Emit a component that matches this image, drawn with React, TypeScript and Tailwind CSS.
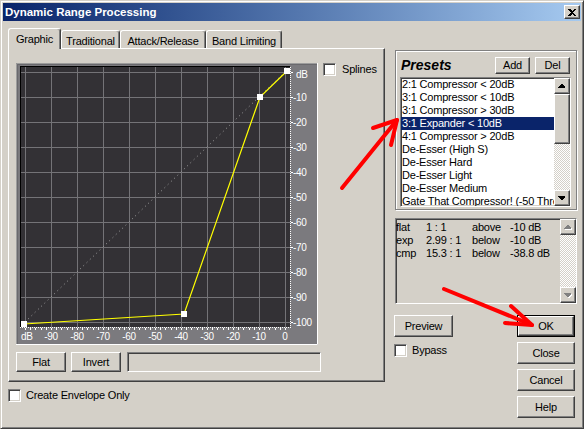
import React from "react";

const raised =
  "border border-t-white border-l-white border-r-[#404040] border-b-[#404040] shadow-[inset_-1px_-1px_#808080]";
const sunken =
  "border border-t-[#808080] border-l-[#808080] border-r-white border-b-white shadow-[inset_1px_1px_#404040,inset_-1px_-1px_#d4d0c8]";
const checker =
  "bg-[image:repeating-conic-gradient(#ffffff_0%_25%,#d4d0c8_0%_50%)] bg-[length:2px_2px]";

function Btn({ label, className }: { label: string; className: string }) {
  return (
    <div className={`${raised} ${className} bg-[#d4d0c8] flex items-center justify-center text-black shrink-0`}>
      {label}
    </div>
  );
}

function Check() {
  return <div className={`${sunken} bg-white w-[13px] h-[13px] shrink-0`} />;
}

function Arrow({ up, disabled }: { up: boolean; disabled?: boolean }) {
  const d = up ? "M3 0 L4 0 L7 3 L7 4 L0 4 L0 3 Z" : "M0 0 L7 0 L7 1 L4 4 L3 4 L0 1 Z";
  return (
    <div className={`${raised} bg-[#d4d0c8] w-[16px] h-[16px] flex items-center justify-center shrink-0`}>
      <svg width="8" height="5" viewBox="0 0 8 5" shapeRendering="crispEdges">
        {disabled && <path d={d} transform="translate(1 1)" fill="#ffffff" />}
        <path d={d} fill={disabled ? "#808080" : "#000000"} />
      </svg>
    </div>
  );
}

function Graph() {
  const vx = Array.from({ length: 11 }, (_, k) => 9 + 26 * k);
  const hy = Array.from({ length: 11 }, (_, k) => 9 + 25 * k);
  const ticks = Array.from({ length: 51 }, (_, j) => 9 + 5.2 * j);
  const right = ["dB", "-10", "-20", "-30", "-40", "-50", "-60", "-70", "-80", "-90", "-100"];
  const bottom = ["dB", "-90", "-80", "-70", "-60", "-50", "-40", "-30", "-20", "-10", "0"];
  const pts: [number, number][] = [
    [8, 261],
    [168, 251],
    [244, 34],
    [271, 8],
  ];
  return (
    <svg width={302} height={282} className="block shrink-0" style={{ fontFamily: '"Liberation Sans", Arial, sans-serif' }}>
      <rect x={0} y={0} width={302} height={282} fill="#7b7a7e" />
      <path d="M0.5 282 V0.5 H302" stroke="#9c9c9c" fill="none" />
      <path d="M1.5 281 V1.5 H301" stroke="#6a696d" fill="none" />
      <path d="M0 281.5 H301.5 V0" stroke="#ffffff" fill="none" />
      <rect x={4} y={3} width={270} height={261} fill="#333135" />
      <line x1={4.5} y1={3} x2={4.5} y2={264} stroke="#000000" />
      <line x1={4} y1={3.5} x2={274} y2={3.5} stroke="#000000" />
      {vx.map((x) => (
        <line key={"v" + x} x1={x + 0.5} y1={4} x2={x + 0.5} y2={264} stroke="#747377" />
      ))}
      {hy.map((y) => (
        <line key={"h" + y} x1={5} y1={y + 0.5} x2={274} y2={y + 0.5} stroke="#747377" />
      ))}
      <line x1={274.5} y1={4} x2={274.5} y2={265} stroke="#ffffff" strokeDasharray="1 1" />
      <line x1={4} y1={264.5} x2={275} y2={264.5} stroke="#ffffff" strokeDasharray="1 1" />
      {ticks.map((x, j) => (
        <line key={"t" + j} x1={Math.round(x) + 0.5} y1={265} x2={Math.round(x) + 0.5} y2={267} stroke="#ffffff" />
      ))}
      {hy.map((y) => (
        <line key={"rt" + y} x1={275} y1={y + 0.5} x2={277} y2={y + 0.5} stroke="#ffffff" />
      ))}
      {right.map((t, k) => (
        <text key={"r" + k} x={k === 0 ? 280 : 277} y={(k === 0 ? 11 : 9 + 25 * k) + 3.6} fontSize={10} letterSpacing={-0.3} fill="#ffffff">
          {t}
        </text>
      ))}
      {bottom.map((t, k) => (
        <text
          key={"b" + k}
          x={k === 0 ? 5 : 9 + 26 * k}
          y={277}
          fontSize={10}
          letterSpacing={-0.3}
          fill="#ffffff"
          textAnchor={k === 0 ? "start" : "middle"}
        >
          {t}
        </text>
      ))}
      <line x1={9} y1={259} x2={269} y2={9} stroke="#a4a4a4" strokeDasharray="1 3.5" />
      <polyline points={pts.map((p) => p.join(",")).join(" ")} fill="none" stroke="#ffff00" strokeWidth={1.2} />
      {pts.map(([x, y], i) => (
        <rect key={"p" + i} x={x - 3} y={y - 3} width={6} height={6} fill="#ffffff" />
      ))}
    </svg>
  );
}

const presets = [
  "2:1 Compressor < 20dB",
  "3:1 Compressor < 10dB",
  "3:1 Compressor > 30dB",
  "3:1 Expander < 10dB",
  "4:1 Compressor > 20dB",
  "De-Esser (High S)",
  "De-Esser Hard",
  "De-Esser Light",
  "De-Esser Medium",
  "Gate That Compressor! (-50 Threshold)",
];

const info = [
  ["flat", "1 : 1", "above", "-10 dB"],
  ["exp", "2.99 : 1", "below", "-10 dB"],
  ["cmp", "15.3 : 1", "below", "-38.8 dB"],
];

export default function App() {
  return (
    <div className="w-[584px] h-[429px] relative overflow-hidden bg-[#d4d0c8] font-['Liberation_Sans',Arial,sans-serif] text-[11px] leading-[13px] tracking-[-0.2px] text-black">
      <div className="w-full h-full flex flex-col border border-t-[#d4d0c8] border-l-[#d4d0c8] border-r-[#404040] border-b-[#404040] shadow-[inset_1px_1px_#ffffff,inset_-1px_-1px_#808080] p-[2px]">
        {/* title bar */}
        <div className="h-[18px] shrink-0 flex items-center justify-between pl-[2px] pr-[1px] bg-linear-to-r from-[#0a246a] to-[#a6caf0]">
          <span className="text-white font-bold text-[11.5px] tracking-normal">Dynamic Range Processing</span>
          <div className={`${raised} bg-[#d4d0c8] w-[16px] h-[14px] flex items-center justify-center`}>
            <svg width="8" height="7" viewBox="0 0 8 7" shapeRendering="crispEdges">
              <path d="M0 0 H2 L4 2 L6 0 H8 L5 3.5 L8 7 H6 L4 5 L2 7 H0 L3 3.5 Z" fill="#000000" />
            </svg>
          </div>
        </div>

        {/* body */}
        <div className="flex pl-[5px] pt-[7px]">
          {/* left column */}
          <div className="w-[377px] flex flex-col shrink-0">
            <div className="h-[21px] flex items-end relative z-10">
              <div className="w-[53px] h-[21px] bg-[#d4d0c8] border-t border-l border-r border-t-white border-l-white border-r-[#404040] shadow-[inset_-1px_0_#808080] rounded-t-[3px] flex justify-center pt-[4px]">
                Graphic
              </div>
              {[
                ["Traditional", "w-[59px]"],
                ["Attack/Release", "w-[86px]"],
                ["Band Limiting", "w-[76px]"],
              ].map(([t, w]) => (
                <div
                  key={t}
                  className={`${w} h-[18px] mb-[1px] bg-[#d4d0c8] border-t border-l border-r border-t-white border-l-white border-r-[#404040] shadow-[inset_-1px_0_#808080] rounded-t-[3px] flex justify-center pt-[4px]`}
                >
                  {t}
                </div>
              ))}
            </div>
            <div className="-mt-[1px] h-[334px] border border-t-white border-l-white border-r-[#404040] border-b-[#404040] shadow-[inset_-1px_-1px_#808080] flex flex-col pl-[7px] pt-[14px]">
              <div className="flex items-start">
                <Graph />
                <div className="flex items-center ml-[5px]">
                  <Check />
                  <span className="ml-[6px]">Splines</span>
                </div>
              </div>
              <div className="flex mt-[7px]">
                <Btn label="Flat" className="w-[50px] h-[20px]" />
                <Btn label="Invert" className="w-[50px] h-[20px] ml-[5px]" />
                <div className={`${sunken} w-[194px] h-[20px] ml-[6px]`} />
              </div>
            </div>
            <div className="flex items-center mt-[7px]">
              <Check />
              <span className="ml-[5px]">Create Envelope Only</span>
            </div>
          </div>

          {/* right column */}
          <div className="w-[184px] ml-[9px] flex flex-col shrink-0">
            <div className="mt-[22px] ml-[1px] w-[182px] h-[160px] border border-[#808080] shadow-[inset_1px_1px_#ffffff,1px_1px_#ffffff] flex flex-col">
              <div className="mt-[6px] h-[17px] flex items-center">
                <span className="pl-[5px] font-bold italic text-[14px] tracking-normal">Presets</span>
                <Btn label="Add" className="w-[35px] h-[17px] ml-auto" />
                <Btn label="Del" className="w-[35px] h-[17px] ml-[5px] mr-[6px]" />
              </div>
              <div className={`${sunken} bg-white w-[171px] h-[130px] mt-[3px] ml-[4px] flex`}>
                <div className="flex-1 min-w-0 overflow-hidden flex flex-col">
                  {presets.map((p, i) => (
                    <div
                      key={i}
                      className={`h-[13px] shrink-0 leading-[13px] pl-[1px] whitespace-nowrap ${
                        i === 3 ? "bg-[#0a246a] text-white" : "text-black"
                      }`}
                    >
                      {p}
                    </div>
                  ))}
                </div>
                <div className="w-[16px] flex flex-col shrink-0">
                  <Arrow up />
                  <div className={`${raised} bg-[#d4d0c8] h-[50px] shrink-0`} />
                  <div className={`flex-1 ${checker}`} />
                  <Arrow up={false} />
                </div>
              </div>
            </div>

            <div className={`${sunken} mt-[8px] ml-[1px] w-[182px] h-[86px] flex bg-[#d4d0c8]`}>
              <div className="flex-1 pt-[2px] flex flex-col">
                {info.map((r, i) => (
                  <div key={i} className="grid grid-cols-[30px_46px_38px_1fr] h-[13px] whitespace-nowrap">
                    {r.map((c, j) => (
                      <span key={j}>{c}</span>
                    ))}
                  </div>
                ))}
              </div>
              <div className="w-[16px] flex flex-col shrink-0">
                <Arrow up disabled />
                <div className={`flex-1 ${checker}`} />
                <Arrow up={false} disabled />
              </div>
            </div>

            <div className="mt-[11px] flex">
              <div className="w-[123px] flex flex-col shrink-0">
                <Btn label="Preview" className="w-[59px] h-[22px]" />
                <div className="flex items-center mt-[7px]">
                  <Check />
                  <span className="ml-[5px]">Bypass</span>
                </div>
              </div>
              <div className="flex flex-col gap-[5px]">
                <div className="w-[58px] h-[22px] border border-black flex">
                  <Btn label="OK" className="flex-1" />
                </div>
                <Btn label="Close" className="w-[58px] h-[22px]" />
                <Btn label="Cancel" className="w-[58px] h-[22px]" />
                <Btn label="Help" className="w-[58px] h-[22px]" />
              </div>
            </div>
          </div>
        </div>
      </div>

      {/* red annotation arrows */}
      <svg className="absolute left-0 top-0 pointer-events-none" width={584} height={429}>
        <g stroke="#ff0000" strokeWidth={4} strokeLinecap="round" strokeLinejoin="round" fill="none">
          <path d="M342 188 L397 120" />
          <path d="M373 128 L397 120 L391 145" />
          <path d="M444 289 L532 325" />
          <path d="M505 323 L532 325 L511 306" />
        </g>
      </svg>
    </div>
  );
}
